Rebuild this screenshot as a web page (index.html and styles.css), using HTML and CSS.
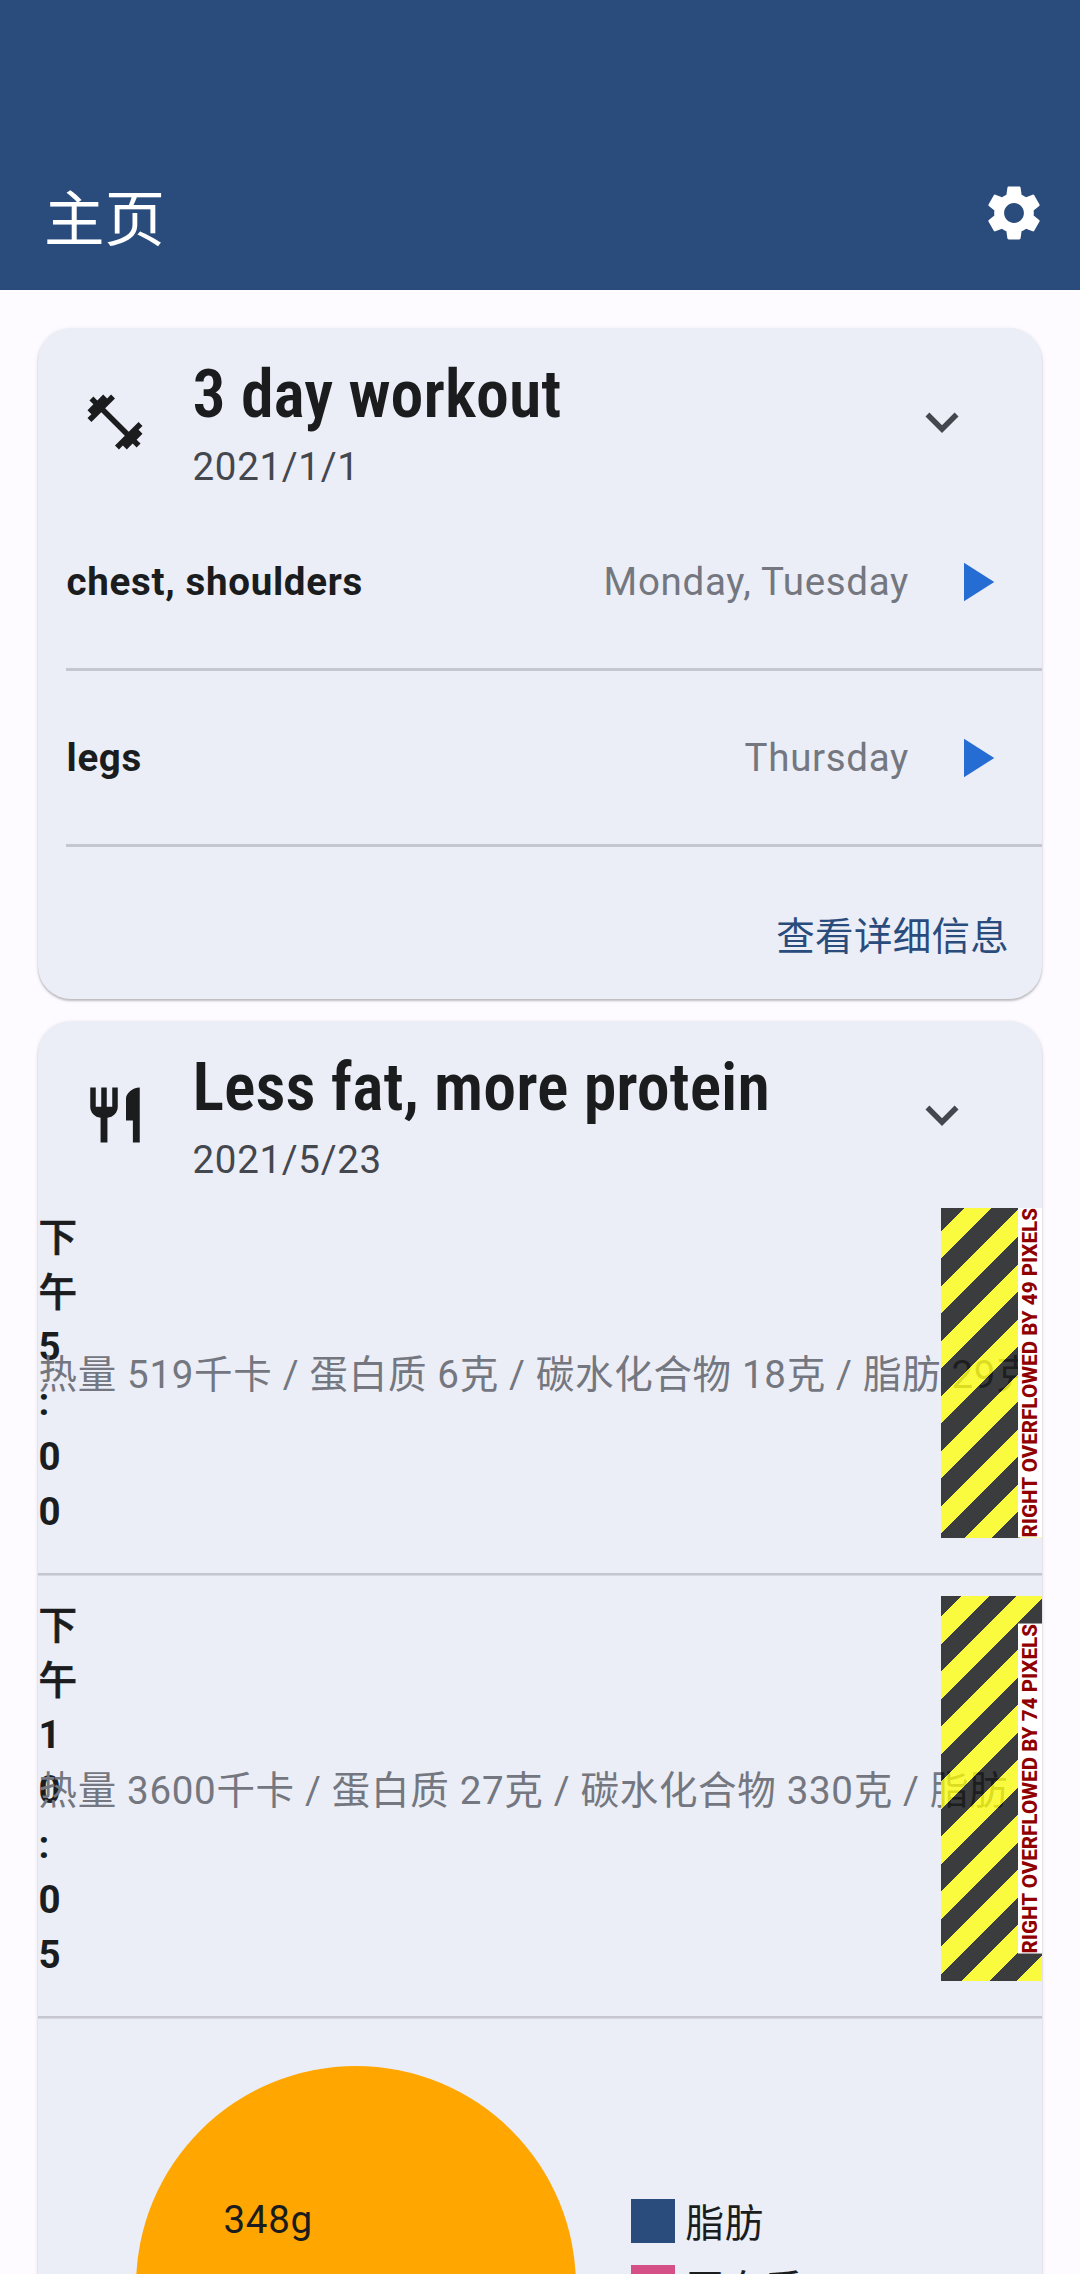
FILE: index.html
```html
<!DOCTYPE html>
<html lang="zh-CN">
<head>
<meta charset="utf-8">
<title>主页</title>
<link rel="stylesheet" href="styles.css">
</head>
<body>
<header class="app-bar">
  <h1 class="app-title">主页</h1>
  <svg class="icon" viewBox="0 0 24 24"><path d="M19.14 12.94c.04-.3.06-.61.06-.94 0-.32-.02-.64-.07-.94l2.03-1.58c.18-.14.23-.41.12-.61l-1.92-3.32c-.12-.22-.37-.29-.59-.22l-2.39.96c-.5-.38-1.03-.7-1.62-.94l-.36-2.54c-.04-.24-.24-.41-.48-.41h-3.84c-.24 0-.43.17-.47.41l-.36 2.54c-.59.24-1.13.57-1.62.94l-2.39-.96c-.22-.08-.47 0-.59.22L2.74 8.87c-.12.21-.08.47.12.61l2.03 1.58c-.05.3-.09.63-.09.94s.02.64.07.94l-2.03 1.58c-.18.14-.23.41-.12.61l1.92 3.32c.12.22.37.29.59.22l2.39-.96c.5.38 1.03.7 1.62.94l.36 2.54c.05.24.24.41.48.41h3.84c.24 0 .44-.17.47-.41l.36-2.54c.59-.24 1.13-.56 1.62-.94l2.39.96c.22.08.47 0 .59-.22l1.92-3.32c.12-.22.07-.47-.12-.61l-2.01-1.58zM12 15.6c-1.98 0-3.6-1.62-3.6-3.6s1.62-3.6 3.6-3.6 3.6 1.62 3.6 3.6-1.62 3.6-3.6 3.6z"/></svg>
</header>
<main class="content">
  <section class="card">
    <div class="tile">
      <svg class="icon" viewBox="0 0 24 24"><path d="M20.57 14.86L22 13.43 20.57 12 17 15.57 8.43 7 12 3.43 10.57 2 9.14 3.43 7.71 2 5.57 4.14 4.14 2.71 2.71 4.14l1.43 1.43L2 7.71l1.43 1.43L2 10.57 3.43 12 7 8.43 15.57 17 12 20.57 13.43 22l1.43-1.43L16.29 22l2.14-2.14 1.43 1.43 1.43-1.43-1.43-1.43L22 16.29z"/></svg>
      <div class="tile-text">
        <h2 class="tile-title">3 day workout</h2>
        <p class="tile-date">2021/1/1</p>
      </div>
      <svg class="icon chevron" viewBox="0 0 24 24"><path d="M16.59 8.59L12 13.17 7.41 8.59 6 10l6 6 6-6z"/></svg>
    </div>
    <div class="day day-first">
      <span class="day-name">chest, shoulders</span>
      <span class="day-when">Monday, Tuesday</span>
      <svg class="icon play" viewBox="0 0 24 24"><path d="M8 5v14l11-7z"/></svg>
    </div>
    <div class="day">
      <span class="day-name">legs</span>
      <span class="day-when">Thursday</span>
      <svg class="icon play" viewBox="0 0 24 24"><path d="M8 5v14l11-7z"/></svg>
    </div>
    <div class="actions"><a class="details">查看详细信息</a></div>
  </section>

  <section class="card nutrition">
    <div class="tile">
      <svg class="icon" viewBox="0 0 24 24"><path d="M11 9H9V2H7v7H5V2H3v7c0 2.12 1.66 3.84 3.75 3.97V22h2.5v-9.03C11.34 12.84 13 11.12 13 9V2h-2v7zm5-3v8h2.5v8H21V2c-2.76 0-5 2.24-5 4z"/></svg>
      <div class="tile-text">
        <h2 class="tile-title">Less fat, more protein</h2>
        <p class="tile-date">2021/5/23</p>
      </div>
      <svg class="icon chevron" viewBox="0 0 24 24"><path d="M16.59 8.59L12 13.17 7.41 8.59 6 10l6 6 6-6z"/></svg>
    </div>
    <div class="meal">
      <div class="meal-time"><div class="meal-period">下<br>午</div>5<br>:<br>0<br>0</div>
      <div class="meal-facts">热量 519千卡 / 蛋白质 6克 / 碳水化合物 18克 / 脂肪 29克</div>
      <div class="overflow"><span class="overflow-label">RIGHT OVERFLOWED BY 49 PIXELS</span></div>
    </div>
    <div class="rule"></div>
    <div class="meal">
      <div class="meal-time"><div class="meal-period">下<br>午</div>1<br>0<br>:<br>0<br>5</div>
      <div class="meal-facts">热量 3600千卡 / 蛋白质 27克 / 碳水化合物 330克 / 脂肪</div>
      <div class="overflow overflow-tall"><span class="overflow-label">RIGHT OVERFLOWED BY 74 PIXELS</span></div>
    </div>
    <div class="rule"></div>
    <div class="chart">
      <div class="pie"><span class="pie-value">348g</span></div>
      <ul class="legend">
        <li class="legend-item"><i class="swatch swatch-fat"></i><span>脂肪</span></li>
        <li class="legend-item"><i class="swatch swatch-protein"></i><span>蛋白质</span></li>
      </ul>
    </div>
  </section>
</main>
</body>
</html>
```
FILE: styles.css
```css
* { box-sizing: border-box; margin: 0; padding: 0; }

html, body { height: 2274px; overflow: hidden; }

body {
  display: flex;
  flex-direction: column;
  background: #fdfbff;
  color: #1a1c1e;
  font-family: Roboto, "Noto Sans CJK SC", sans-serif;
  font-size: 38.5px;
  line-height: 55px;
  letter-spacing: 0.6875px;
}

.icon { width: 66px; height: 66px; flex: none; fill: currentColor; display: block; }

.app-bar {
  height: 290px;
  flex: none;
  padding: 136px 33px 0 44px;
  display: flex;
  align-items: center;
  justify-content: space-between;
  background: #2a4c7d;
  color: #fff;
}
.app-title { padding-top: 15px; font-size: 60.5px; font-weight: 400; line-height: 80px; letter-spacing: 0; }

.content {
  flex: 1;
  min-height: 0;
  padding: 38px 38px 0;
  display: flex;
  flex-direction: column;
  gap: 22px;
  overflow: hidden;
}

.card {
  flex: none;
  border-radius: 33px;
  background: #ebeef6;
  box-shadow: 0 2px 2px rgba(0, 0, 0, .2), 0 1px 4px rgba(0, 0, 0, .1);
  overflow: hidden;
}

.tile {
  height: 187px;
  padding: 0 67px 0 44px;
  display: flex;
  align-items: center;
  gap: 44.5px;
}
.tile-text { flex: 1; padding-top: 2px; }
.tile-title {
  font-family: "Roboto Condensed", Roboto, sans-serif;
  font-size: 66px;
  font-weight: 600;
  line-height: 88px;
  letter-spacing: 0;
  white-space: nowrap;
}
.tile-date { color: #44474e; }
.chevron { color: #44474e; }

.day {
  height: 176px;
  margin-left: 28px;
  padding: 1px 34px 0 0.5px;
  display: flex;
  align-items: center;
  border-bottom: 3px solid #c5c6d0;
}
.day-first { height: 156px; padding-bottom: 19px; padding-top: 0; }
.day-name { flex: 1; font-weight: 700; padding-bottom: 2px; }
.day-when { color: #74777f; margin-right: 33px; padding-bottom: 2px; }
.play { color: #266dd3; }

.actions { height: 152px; display: flex; justify-content: flex-end; align-items: center; padding: 26px 33px 0 0; }
.details { color: #2a4c7d; letter-spacing: 0.275px; }

.meal { position: relative; display: grid; align-items: center; overflow: hidden; }
.meal-time, .meal-facts { grid-area: 1 / 1; }
.meal-time { font-weight: 700; padding: 1px 0 0 0.5px; margin-bottom: -1px; }
.meal-period { font-weight: 500; -webkit-text-stroke: 0.7px currentColor; padding-top: 1px; margin-bottom: -1px; }
.meal-facts { color: #74777f; white-space: nowrap; padding: 3px 0 0 0.5px; }

.overflow {
  position: absolute;
  top: 0;
  right: 0;
  bottom: 0;
  width: 101px;
  display: flex;
  align-items: center;
  justify-content: flex-end;
  background: repeating-linear-gradient(135deg,
    rgba(0, 0, 0, .75) 0 16.5px,
    rgba(255, 255, 0, .75) 16.5px 35.94px,
    rgba(0, 0, 0, .75) 35.94px 38.89px);
}
.overflow-tall {
  background: repeating-linear-gradient(135deg,
    rgba(0, 0, 0, .75) 0 14.8px,
    rgba(255, 255, 0, .75) 14.8px 34.24px,
    rgba(0, 0, 0, .75) 34.24px 38.89px);
}
.overflow-label {
  writing-mode: vertical-rl;
  transform: rotate(180deg);
  width: 24px;
  line-height: 24px;
  font-size: 20.625px;
  font-weight: 800;
  letter-spacing: 0;
  white-space: nowrap;
  color: #900000;
  background: #fff;
}

.rule {
  height: 58px;
  background: linear-gradient(#c5c6d0 0 2px, #d6d8e1 2px 3px) 0 35px / 100% 3px no-repeat;
}

.chart { display: flex; align-items: flex-start; padding: 27px 0 0 97.5px; }
.pie { width: 440px; height: 440px; border-radius: 50%; background: #ffa600; padding: 126px 0 0 88px; }
.legend { list-style: none; padding: 127px 0 0 55px; display: flex; flex-direction: column; gap: 11px; }
.legend-item { display: flex; align-items: center; gap: 11px; }
.legend-item span { padding-top: 3px; margin-bottom: -3px; }
.swatch { width: 44px; height: 44px; }
.swatch-fat { background: #2a4c7d; }
.swatch-protein { background: #d45087; }
```
